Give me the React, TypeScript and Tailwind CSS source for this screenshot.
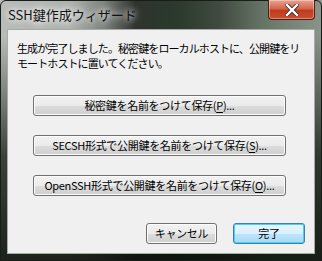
import React from "react";

const font = "font-['MS_UI_Gothic','Noto_Sans_CJK_JP',sans-serif]";

interface BtnProps {
    children: React.ReactNode;
    width: string;
    primary?: boolean;
}

const WinButton: React.FC<BtnProps> = ({ children, width, primary }) => {
    return (
        <button
            className={`${width} h-[21px] rounded-[3px] border text-[11px] leading-none tracking-[-0.3px] whitespace-nowrap text-black flex items-center justify-center ${
                primary
                    ? "border-[#3c7fb1] shadow-[inset_0_0_0_1px_#48d0f7] bg-[linear-gradient(180deg,#eaf6fd_0%,#d9f0fc_50%,#bee6fd_51%,#a7d9f5_100%)]"
                    : "border-[#707070] shadow-[inset_0_0_0_1px_#fcfcfc] bg-[linear-gradient(180deg,#f2f2f2_0%,#ebebeb_50%,#dddddd_51%,#cfcfcf_100%)]"
            }`}
        >
            {children}
        </button>
    );
};

const Key: React.FC<{ k: string }> = ({ k }) => <span className="underline underline-offset-2">{k}</span>;

export default function App() {
    return (
        <div className={`w-[322px] h-[261px] relative overflow-hidden ${font} bg-[linear-gradient(90deg,#b9bdb9_0%,#aeb2ae_22%,#80857f_32%,#2f332f_42%,#2a3a2b_55%,#414a41_68%,#677567_82%,#8a948a_100%)]`}>
            {/* glass darkening toward the bottom */}
            <div className="absolute inset-0 bg-[linear-gradient(180deg,rgba(0,0,0,0)_0%,rgba(0,0,0,0)_14%,rgba(15,25,15,0.75)_60%,rgba(10,18,10,0.9)_100%)] pointer-events-none" />
            {/* frame */}
            <div className="absolute inset-0 border border-[#1a1c1a] rounded-t-[6px] pointer-events-none" />
            <div className="relative flex flex-col h-full">
                {/* title bar */}
                <div className="h-[29px] flex items-start justify-between">
                    <div className="pl-[8px] pt-[7px] text-[13px] leading-[16px] text-[#111] [text-shadow:0_0_6px_#ffffff,0_0_10px_#ffffff]">
                        SSH鍵作成ウィザード
                    </div>
                    <button className="mr-[7px] w-[47px] h-[20px] rounded-b-[4px] border border-t-0 border-[#5a1a10] bg-[linear-gradient(180deg,#e8a493_0%,#d4654d_45%,#c03a1c_55%,#c8502e_100%)] shadow-[inset_0_0_0_1px_rgba(255,255,255,0.35)] flex items-center justify-center">
                        <svg width="14" height="12" viewBox="0 0 14 12">
                            <path d="M2 1 L12 11 M12 1 L2 11" stroke="#3a2a2a" strokeWidth="4" strokeLinecap="square" />
                            <path d="M2 1 L12 11 M12 1 L2 11" stroke="#ffffff" strokeWidth="2.4" strokeLinecap="square" />
                        </svg>
                    </button>
                </div>

                {/* client area */}
                <div className="mx-[7px] h-[225px] border border-[#a5aba5] bg-[#f0f0f0] flex flex-col">
                    <div className="pl-[9px] pt-[11px] text-[11px] leading-[15px] text-black tracking-[-0.9px] whitespace-nowrap">
                        <p>生成が完了しました。秘密鍵をローカルホストに、公開鍵をリ</p>
                        <p>モートホストに置いてください。</p>
                    </div>

                    <div className="pl-[25px] mt-[24px] flex flex-col gap-[19px]">
                        <WinButton width="w-[253px]">
                            秘密鍵を名前をつけて保存(<Key k="P" />)...
                        </WinButton>
                        <WinButton width="w-[253px]">
                            SECSH形式で公開鍵を名前をつけて保存(<Key k="S" />)...
                        </WinButton>
                        <WinButton width="w-[253px]">
                            OpenSSH形式で公開鍵を名前をつけて保存(<Key k="O" />)...
                        </WinButton>
                    </div>

                    <div className="mt-[27px] pr-[9px] flex justify-end gap-[16px]">
                        <WinButton width="w-[71px]">キャンセル</WinButton>
                        <WinButton width="w-[72px]" primary>
                            完了
                        </WinButton>
                    </div>
                </div>
            </div>
        </div>
    );
}
